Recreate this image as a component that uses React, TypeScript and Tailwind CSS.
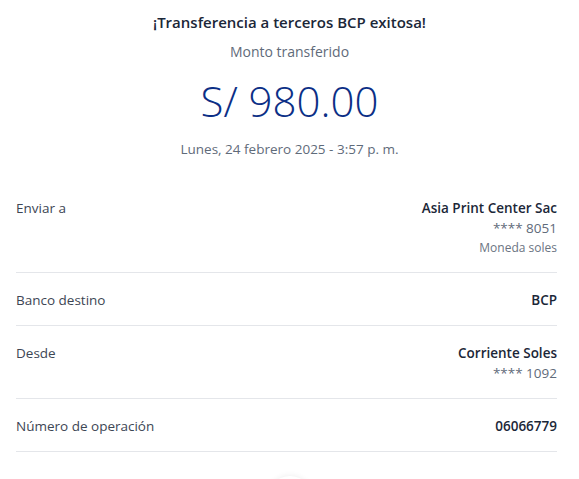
export default function App() {
  const rows = [
    { label: 'Enviar a', main: 'Asia Print Center Sac', sub: ['**** 8051'], note: 'Moneda soles' },
    { label: 'Banco destino', main: 'BCP', sub: [] as string[] },
    { label: 'Desde', main: 'Corriente Soles', sub: ['**** 1092'] },
    { label: 'Número de operación', main: '06066779', sub: [] as string[] },
  ]

  return (
    <div className="w-[579px] h-[479px] overflow-hidden bg-white font-['Open_Sans',sans-serif]">
      <div className="flex flex-col items-center pt-[11px]">
        <h1 className="text-[15px] leading-[22px] font-semibold text-[#1b2738]">
          ¡Transferencia a terceros BCP exitosa!
        </h1>
        <p className="mt-[9px] text-[14px] leading-[20px] text-[#5f6b7a]">Monto transferido</p>
        <p className="mt-[14px] text-[42px] leading-[50px] font-light text-[#0c2f86]">S/ 980.00</p>
        <p className="mt-[13px] text-[13.5px] leading-[20px] text-[#5f6b7a]">
          Lunes, 24 febrero 2025 - 3:57 p. m.
        </p>
      </div>

      <div className="mt-[22px] pl-[16px] pr-[22px]">
        {rows.map((r) => (
          <div key={r.label} className="flex justify-between border-b border-[#e4e6ea] pt-[17px] pb-[15px]">
            <span className="text-[13.5px] leading-[20px] text-[#3d4654]">{r.label}</span>
            <div className="flex flex-col items-end">
              <span className="text-[13.5px] leading-[20px] font-semibold text-[#1b2738]">{r.main}</span>
              {r.sub.map((s) => (
                <span key={s} className="text-[13.5px] leading-[20px] text-[#5f6b7a]">{s}</span>
              ))}
              {r.note && <span className="text-[12px] leading-[19px] text-[#6b7482]">{r.note}</span>}
            </div>
          </div>
        ))}
      </div>

      <div className="flex justify-center mt-[24px]">
        <div className="w-[44px] h-[44px] rounded-full bg-white shadow-[0_0_6px_rgba(0,0,0,0.08)]" />
      </div>
    </div>
  )
}
